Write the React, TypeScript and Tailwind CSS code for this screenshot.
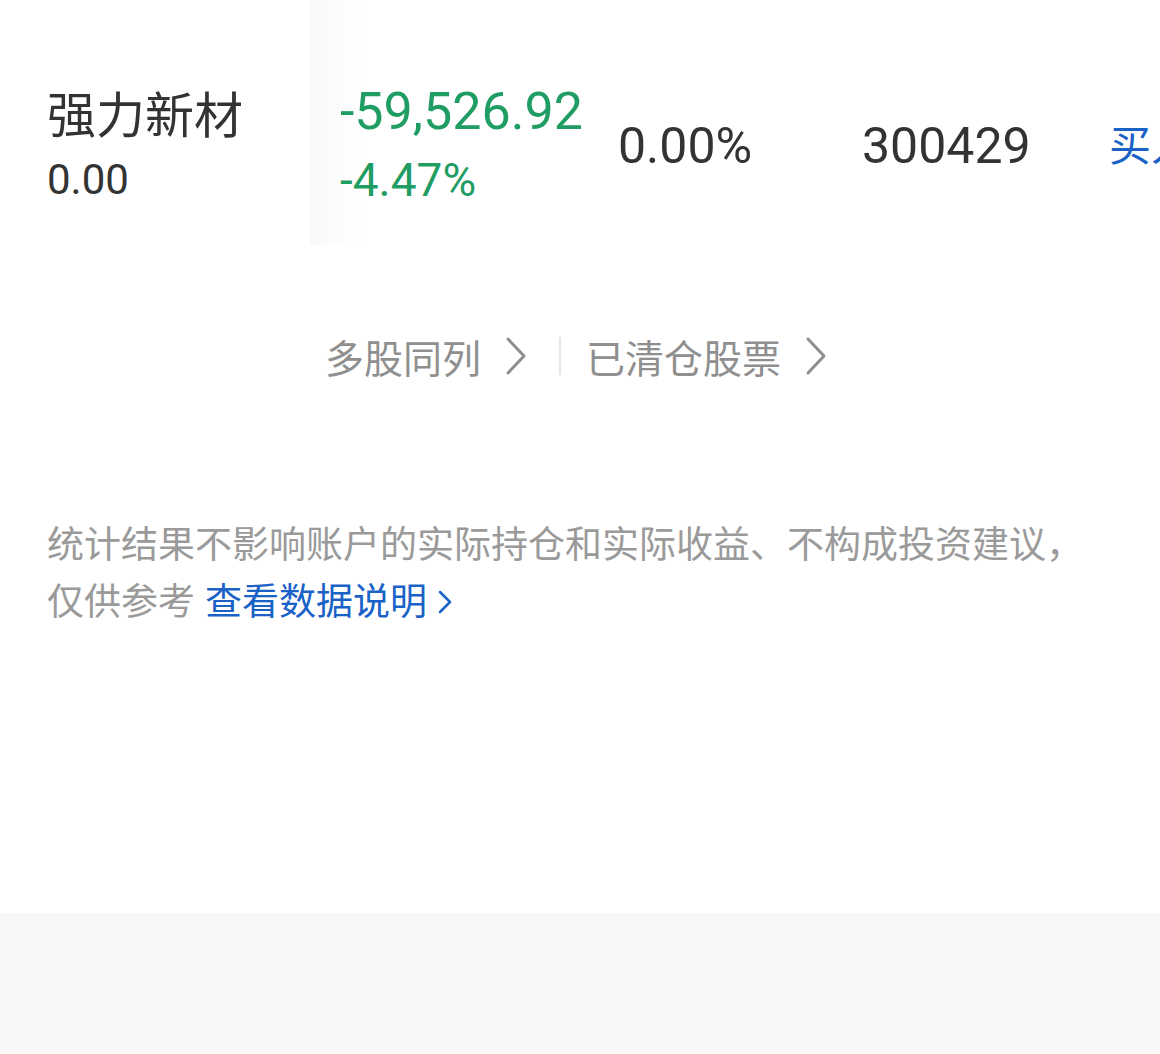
import React from 'react';

const cjk = "font-['Noto_Sans_CJK_SC',sans-serif]";
const num = "font-['Roboto','Noto_Sans_CJK_SC',sans-serif]";

function Chevron({ className }: { className?: string }) {
  return (
    <svg viewBox="0 0 22 40" className={className} fill="none" stroke="currentColor" strokeWidth="3" strokeLinecap="round" strokeLinejoin="round">
      <polyline points="3,3 19,20 3,37" />
    </svg>
  );
}

function HoldingRow() {
  return (
    <div className="flex h-[245px] pt-[48px] overflow-hidden">
      <div className="relative w-[310px] shrink-0 pl-[47px] flex flex-col justify-center bg-white">
        <div className={`${cjk} text-[49px] leading-[66px] text-[#333333]`}>强力新材</div>
        <div className={`${num} text-[42px] leading-[70px] text-[#333333]`}>0.00</div>
      </div>
      <div className="relative w-[280px] shrink-0 pl-[30px] flex flex-col justify-center -mt-[48px] pt-[48px] bg-gradient-to-r from-[#f8f8f8] via-[#fcfcfc] via-[8%] to-white to-[20%]">
        <div className={`${num} text-[52px] leading-[66px] text-[#1f9d63] whitespace-nowrap`}>-59,526.92</div>
        <div className={`${num} text-[46px] leading-[70px] text-[#1f9d63]`}>-4.47%</div>
      </div>
      <div className="w-[244px] shrink-0 pl-[28px] flex items-center">
        <span className={`${num} text-[50px] text-[#333333]`}>0.00%</span>
      </div>
      <div className="w-[248px] shrink-0 pl-[28px] flex items-center">
        <span className={`${num} text-[50px] text-[#333333]`}>300429</span>
      </div>
      <div className="w-[200px] shrink-0 pl-[27px] pb-[8px] flex items-center">
        <span className={`${cjk} text-[42px] text-[#1a62c6] whitespace-nowrap`}>买入</span>
      </div>
    </div>
  );
}

export default function App() {
  return (
    <div className="w-[1160px] h-[1054px] bg-white flex flex-col overflow-hidden">
      <HoldingRow />

      <div className={`${cjk} flex items-center justify-center mt-[72px] h-[78px] text-[39px] text-[#8f8f8f]`}>
        <span className="-ml-[8px]">多股同列</span>
        <Chevron className="w-[22px] h-[40px] ml-[24px] text-[#8f8f8f]" />
        <div className="w-[2px] h-[38px] bg-[#e6e6e6] ml-[32px] mr-[25px]"></div>
        <span>已清仓股票</span>
        <Chevron className="w-[22px] h-[40px] ml-[24px] text-[#8f8f8f]" />
      </div>

      <div className={`${cjk} mt-[119px] px-[47px] text-[37px] leading-[57px] text-[#9a9a9a]`}>
        <p>统计结果不影响账户的实际持仓和实际收益、不构成投资建议，</p>
        <p className="flex items-center">
          仅供参考
          <span className="ml-[10px] text-[#1a62c6]">查看数据说明</span>
          <svg viewBox="0 0 14 24" className="w-[14px] h-[24px] ml-[11px] mt-[4px] text-[#1a62c6]" fill="none" stroke="currentColor" strokeWidth="2.5" strokeLinecap="round" strokeLinejoin="round">
            <polyline points="2,2 12,12 2,22" />
          </svg>
        </p>
      </div>

      <div className="flex-1"></div>
      <div className="h-[141px] bg-[#f8f8f8]"></div>
    </div>
  );
}
